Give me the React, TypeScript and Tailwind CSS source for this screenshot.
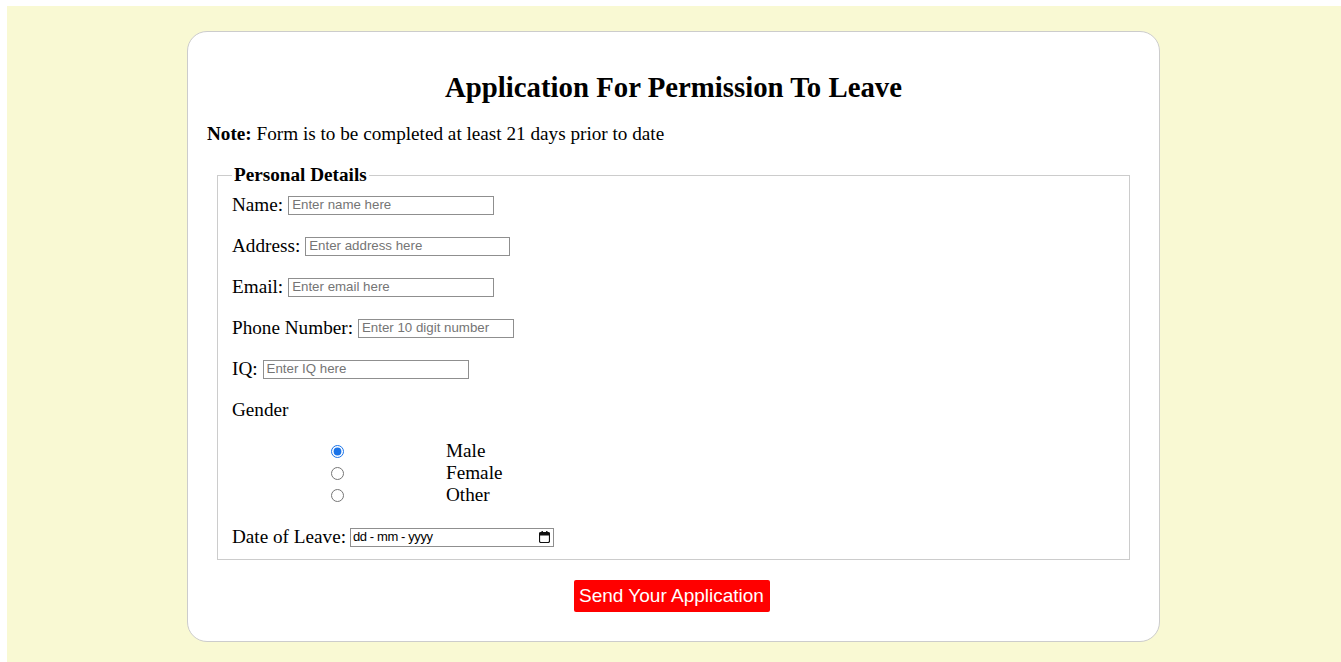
import React from "react";

const serif = { fontFamily: '"Liberation Serif", "Times New Roman", serif' };

const Field: React.FC<{ label: string; placeholder: string; width: string; type?: string }> = ({
  label,
  placeholder,
  width,
  type = "text",
}) => (
  <div className="flex items-center h-[22px]">
    <span>{label}</span>
    <input
      type={type}
      placeholder={placeholder}
      className={`ml-[5px] ${width} h-[19px] border border-[#8f8f8f] px-[3px] text-[13.3px] text-black placeholder:text-[#757575] outline-none bg-white`}
      style={{ fontFamily: '"Liberation Sans", Arial, sans-serif' }}
    />
  </div>
);

const genders = ["Male", "Female", "Other"];

export default function App() {
  return (
    <div className="pl-[7px] pt-[6px] min-h-screen bg-white" style={serif}>
      <div className="bg-[#f9f9d3] pt-[25px] pb-[25px] pr-[1px] min-h-[656px]">
        <div className="mx-auto w-[973px] bg-white border border-[#cccccc] rounded-[20px] p-[19px] text-[19.2px] text-black">
          <h2 className="mt-[20px] text-center text-[28.8px] leading-[33px] font-bold">
            Application For Permission To Leave
          </h2>

          <p className="mt-[19px] leading-[22px]">
            <b>Note:</b> Form is to be completed at least 21 days prior to date
          </p>

          <fieldset className="mx-[10px] mt-[19px] border border-[#cccccc] px-[14px] pt-[8px] pb-[11px]">
            <legend className="px-[2px] font-bold leading-[22px]">Personal Details</legend>

            <div className="flex flex-col gap-[19px]">
              <Field label="Name:" placeholder="Enter name here" width="w-[206px]" />
              <Field label="Address:" placeholder="Enter address here" width="w-[205px]" />
              <Field label="Email:" placeholder="Enter email here" width="w-[206px]" type="email" />
              <Field label="Phone Number:" placeholder="Enter 10 digit number" width="w-[156px]" type="tel" />
              <Field label="IQ:" placeholder="Enter IQ here" width="w-[206px]" />

              <div className="leading-[22px]">Gender</div>

              <div className="pl-[99px]">
                {genders.map((g, i) => (
                  <label key={g} className="flex items-center h-[22px]">
                    <input
                      type="radio"
                      name="gender"
                      defaultChecked={i === 0}
                      className="w-[13px] h-[13px] m-0 accent-[#1a73e8]"
                    />
                    <span className="ml-[102px]">{g}</span>
                  </label>
                ))}
              </div>

              <div className="flex items-center h-[22px] mt-[1px]">
                <span>Date of Leave:</span>
                <div
                  className="ml-[4px] w-[204px] h-[19px] border border-[#8f8f8f] flex items-center justify-between pl-[2px] pr-[3px] text-[13px] text-black"
                  style={{ fontFamily: '"Liberation Sans", Arial, sans-serif' }}
                >
                  <span className="tracking-[-0.4px]">dd - mm - yyyy</span>
                  {/* calendar picker icon */}
                  <svg width="11" height="12" viewBox="0 0 11 12">
                    <rect x="0.5" y="1.5" width="10" height="10" rx="1.5" fill="none" stroke="#111" strokeWidth="1.2" />
                    <rect x="0.5" y="1.5" width="10" height="3" fill="#111" />
                    <rect x="2.5" y="0" width="1.4" height="2.5" fill="#111" />
                    <rect x="7.1" y="0" width="1.4" height="2.5" fill="#111" />
                  </svg>
                </div>
              </div>
            </div>
          </fieldset>

          <div className="flex justify-center mt-[20px] mb-[10px] pr-[4px]">
            <button
              type="button"
              className="bg-[#ff0000] text-white text-[19px] leading-[22px] w-[196px] h-[32px] rounded-[2px]"
              style={{ fontFamily: '"Liberation Sans", Arial, sans-serif' }}
            >
              Send Your Application
            </button>
          </div>
        </div>
      </div>
    </div>
  );
}
